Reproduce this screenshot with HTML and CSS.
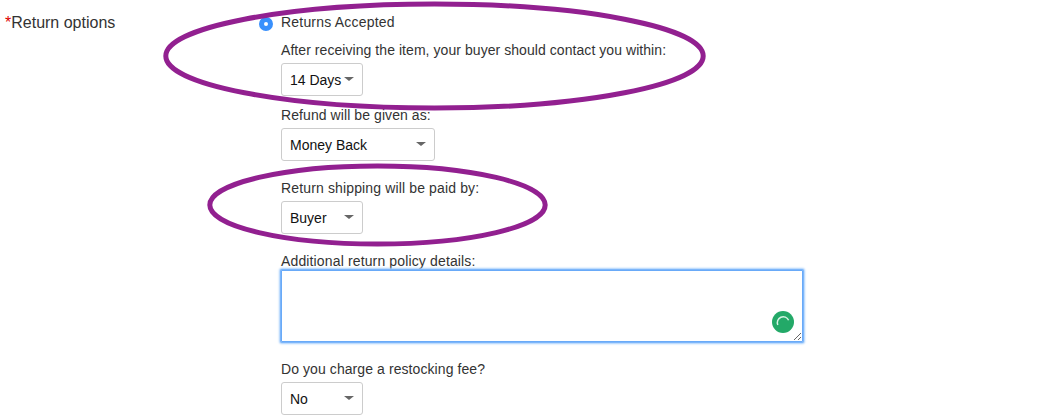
FILE: index.html
```html
<!DOCTYPE html>
<html lang="en">
<head>
  <meta charset="UTF-8">
  <meta name="viewport" content="width=device-width, initial-scale=1.0">
  <title>Return options</title>
  <link rel="stylesheet" href="styles.css">
</head>
<body>
<form class="return-form">
  <div class="section-title"><span class="required">*</span>Return options</div>
  <input type="radio" class="radio" id="accepted" name="returns" checked>
  <div class="fields">
    <label class="radio-label" for="accepted">Returns Accepted</label>
    <div class="field contact">
      <label for="days">After receiving the item, your buyer should contact you within:</label>
      <div class="select-box">
        <select id="days"><option>14 Days</option></select>
      </div>
    </div>
    <div class="field">
      <label for="refund">Refund will be given as:</label>
      <div class="select-box wide">
        <select id="refund"><option>Money Back</option></select>
      </div>
    </div>
    <div class="field shipping">
      <label for="shipping">Return shipping will be paid by:</label>
      <div class="select-box">
        <select id="shipping"><option>Buyer</option></select>
      </div>
    </div>
    <div class="field details">
      <label for="details">Additional return policy details:</label>
      <div class="textarea-box">
        <textarea id="details"></textarea>
        <svg class="checker" width="22" height="22" viewBox="0 0 22 22">
          <circle cx="11" cy="11" r="11" fill="#23a968"/>
          <path d="M5.8 14A5.6 5.6 0 0 1 16.6 9.3" fill="none" stroke="#d5f3e3" stroke-width="1.5"/>
        </svg>
      </div>
    </div>
    <div class="field">
      <label for="fee">Do you charge a restocking fee?</label>
      <div class="select-box">
        <select id="fee"><option>No</option></select>
      </div>
    </div>
  </div>
</form>

<!-- highlight circles -->
<svg class="marks" width="1064" height="417" viewBox="0 0 1064 417">
  <ellipse cx="434.5" cy="56" rx="268.7" ry="52"/>
  <ellipse cx="377.5" cy="205" rx="167.7" ry="39"/>
</svg>
</body>
</html>
```
FILE: styles.css
```css
* {
  box-sizing: border-box;
}

body {
  margin: 0;
  height: 417px;
  overflow: hidden;
  background: #fff;
  color: #333;
  font-family: "Liberation Sans", Arial, sans-serif;
  font-size: 14px;
}

.return-form {
  display: flex;
  align-items: flex-start;
  padding: 12px 0 0 5px;
}

.section-title {
  width: 254px;
  padding-top: 1px;
  font-size: 16px;
  line-height: 20px;
}

.required {
  color: #d00;
}

.radio {
  appearance: none;
  width: 14px;
  height: 14px;
  margin: 5px 8px 0 0;
  border: 5px solid #3990fc;
  border-radius: 50%;
  background: #fff;
}

.fields label {
  display: block;
  height: 20px;
  line-height: 20px;
  letter-spacing: 0.08px;
  white-space: nowrap;
}

.fields .radio-label {
  margin-bottom: 8px;
  letter-spacing: 0.2px;
}

.field {
  margin-bottom: 17px;
}

.contact {
  margin-bottom: 9px;
}

.contact label {
  letter-spacing: 0.06px;
}

.shipping label,
.details label {
  letter-spacing: 0.14px;
}

.select-box {
  position: relative;
  width: 82px;
  height: 33px;
  margin-top: 3px;
}

.select-box.wide {
  width: 154px;
}

.select-box select {
  appearance: none;
  width: 100%;
  height: 100%;
  padding: 1px 0 0 8px;
  border: 1px solid #ccc;
  border-radius: 3px;
  background: #fff;
  color: #111;
  font-family: inherit;
  font-size: 14px;
}

.select-box::after {
  content: "";
  position: absolute;
  top: 14px;
  right: 9px;
  border: 5px solid transparent;
  border-top: 4px solid #666;
  border-bottom: 0;
}

.textarea-box {
  position: relative;
  width: 522px;
  height: 72px;
  margin-top: -1px;
}

.textarea-box textarea {
  display: block;
  width: 100%;
  height: 100%;
  border: 1px solid #69aaf8;
  border-radius: 1px;
  outline: 0;
  box-shadow: 0 0 0 1px #7db6fa, 0 0 2px 2px #a9d0fc;
}

.checker {
  position: absolute;
  right: 9px;
  bottom: 9px;
}

.marks {
  position: absolute;
  top: 0;
  left: 0;
  pointer-events: none;
}

.marks ellipse {
  fill: none;
  stroke: #922090;
  stroke-width: 5;
}
```
